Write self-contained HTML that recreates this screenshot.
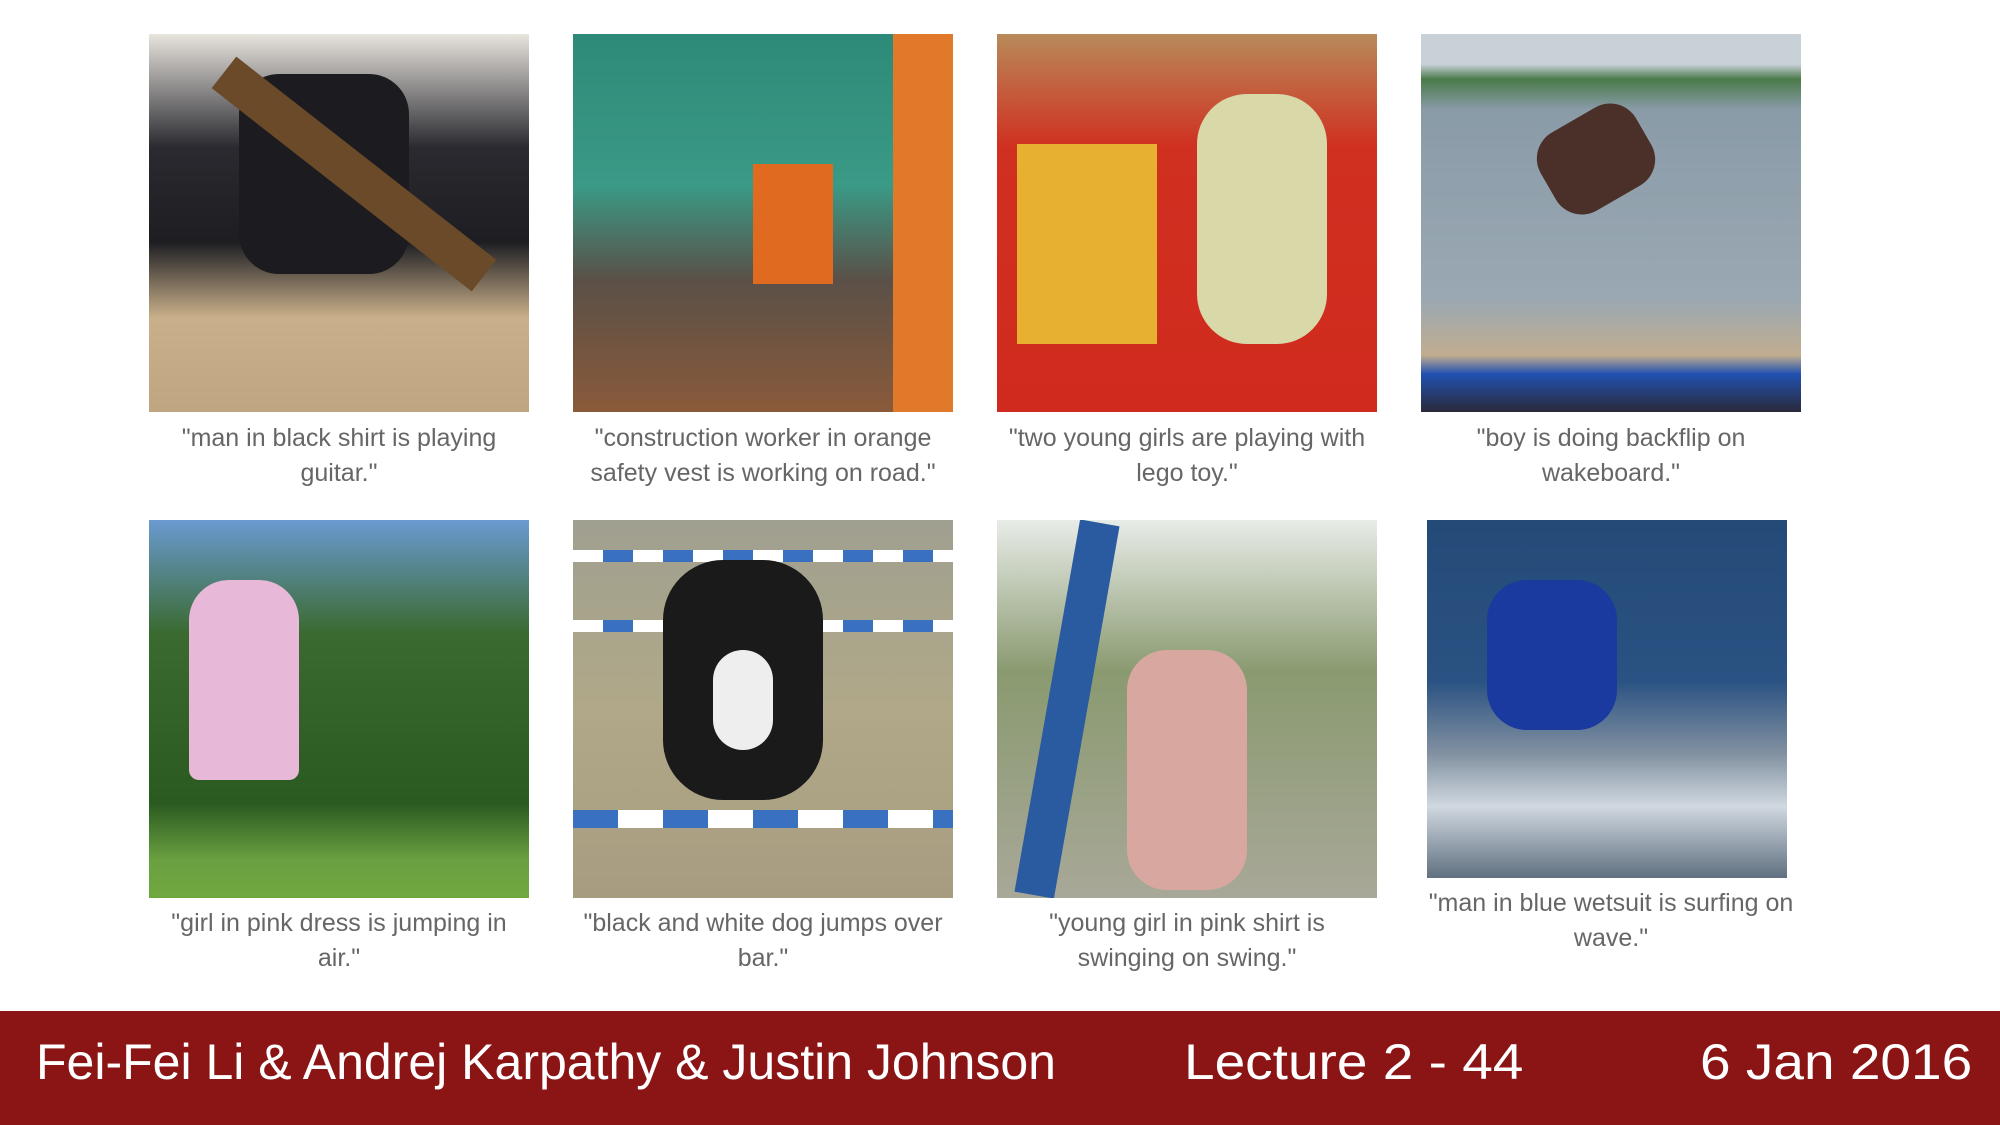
<!DOCTYPE html>
<html><head><meta charset="utf-8"><style>
body{margin:0;width:2000px;height:1125px;background:#fff;position:relative;overflow:hidden;font-family:"Liberation Sans",sans-serif}
.img{position:absolute;width:380px;height:378px;overflow:hidden}
.cap{position:absolute;width:440px;text-align:center;color:#666;font-size:25px;line-height:35px}
.ft{position:absolute;left:0;top:1011px;width:2000px;height:114px;background:#8b1515}
.t{position:absolute;color:#fff;font-size:50px;top:1033px;transform-origin:left top;white-space:nowrap}
</style></head><body>
<div class="img" style="left:149px;top:34px;background:linear-gradient(180deg,#e8e4de 0%,#2a2a30 30%,#1d1d22 55%,#c9b08a 75%,#bfa580 100%)"><div style="position:absolute;left:90px;top:40px;width:170px;height:200px;background:#1c1c20;border-radius:40px"></div><div style="position:absolute;left:40px;top:120px;width:330px;height:40px;background:#6b4a2a;transform:rotate(38deg)"></div></div>
<div class="img" style="left:573px;top:34px;background:linear-gradient(180deg,#2e8a78 0%,#3a9a86 40%,#5a5048 65%,#8a5a3a 100%)"><div style="position:absolute;left:180px;top:130px;width:80px;height:120px;background:#e06a20"></div><div style="position:absolute;right:0;top:0;width:60px;height:378px;background:#e07a2a"></div></div>
<div class="img" style="left:997px;top:34px;background:linear-gradient(180deg,#b88a5a 0%,#d03020 30%,#d02a1e 100%)"><div style="position:absolute;left:20px;top:110px;width:140px;height:200px;background:#e8b030"></div><div style="position:absolute;left:200px;top:60px;width:130px;height:250px;background:#d8d8a8;border-radius:50px"></div></div>
<div class="img" style="left:1421px;top:34px;background:linear-gradient(180deg,#c8d0d8 0%,#c8d0d8 8%,#4a7a4a 12%,#8a9ba8 20%,#9aa8b2 70%,#c0ad90 85%,#2050b0 90%,#2a2a3a 100%)"><div style="position:absolute;left:120px;top:80px;width:110px;height:90px;background:#4a3028;border-radius:30px;transform:rotate(-30deg)"></div></div>
<div class="img" style="left:149px;top:520px;background:linear-gradient(180deg,#6a9ad0 0%,#3a6a30 30%,#2a5a20 75%,#6aa040 90%,#70a840 100%)"><div style="position:absolute;left:40px;top:60px;width:110px;height:200px;background:#e8b8d8;border-radius:40px 40px 10px 10px"></div></div>
<div class="img" style="left:573px;top:520px;background:linear-gradient(180deg,#a0a090 0%,#b0a888 50%,#a89c80 100%)"><div style="position:absolute;left:0;top:30px;width:380px;height:12px;background:repeating-linear-gradient(90deg,#fff 0 30px,#3a70c0 30px 60px)"></div><div style="position:absolute;left:0;top:100px;width:380px;height:12px;background:repeating-linear-gradient(90deg,#fff 0 30px,#3a70c0 30px 60px)"></div><div style="position:absolute;left:0;top:290px;width:380px;height:18px;background:repeating-linear-gradient(90deg,#3a70c0 0 45px,#fff 45px 90px)"></div><div style="position:absolute;left:90px;top:40px;width:160px;height:240px;background:#1a1a1a;border-radius:60px"></div><div style="position:absolute;left:140px;top:130px;width:60px;height:100px;background:#eee;border-radius:30px"></div></div>
<div class="img" style="left:997px;top:520px;background:linear-gradient(180deg,#e8ece8 0%,#8a9a70 40%,#a8a898 100%)"><div style="position:absolute;left:50px;top:0;width:40px;height:378px;background:#2a5aa0;transform:rotate(10deg)"></div><div style="position:absolute;left:130px;top:130px;width:120px;height:240px;background:#d8a8a0;border-radius:40px"></div></div>
<div class="img" style="left:1427px;top:520px;width:360px;height:358px;background:linear-gradient(180deg,#244a78 0%,#2a5282 45%,#8090a0 65%,#d0d8e0 80%,#607080 100%)"><div style="position:absolute;left:60px;top:60px;width:130px;height:150px;background:#1a3aa0;border-radius:40px"></div></div>
<div class="cap" style="left:119px;top:421px">"man in black shirt is playing<br>guitar."</div>
<div class="cap" style="left:543px;top:421px">"construction worker in orange<br>safety vest is working on road."</div>
<div class="cap" style="left:967px;top:421px">"two young girls are playing with<br>lego toy."</div>
<div class="cap" style="left:1391px;top:421px">"boy is doing backflip on<br>wakeboard."</div>
<div class="cap" style="left:119px;top:906px">"girl in pink dress is jumping in<br>air."</div>
<div class="cap" style="left:543px;top:906px">"black and white dog jumps over<br>bar."</div>
<div class="cap" style="left:967px;top:906px">"young girl in pink shirt is<br>swinging on swing."</div>
<div class="cap" style="left:1391px;top:886px">"man in blue wetsuit is surfing on<br>wave."</div>
<div class="ft"></div>
<div class="t" style="left:36px">Fei-Fei Li &amp; Andrej Karpathy &amp; Justin Johnson</div>
<div class="t" style="left:1184px;transform:scaleX(1.1)">Lecture 2 - 44</div>
<div class="t" style="left:1700px;transform:scaleX(1.1)">6 Jan 2016</div>
</body></html>
